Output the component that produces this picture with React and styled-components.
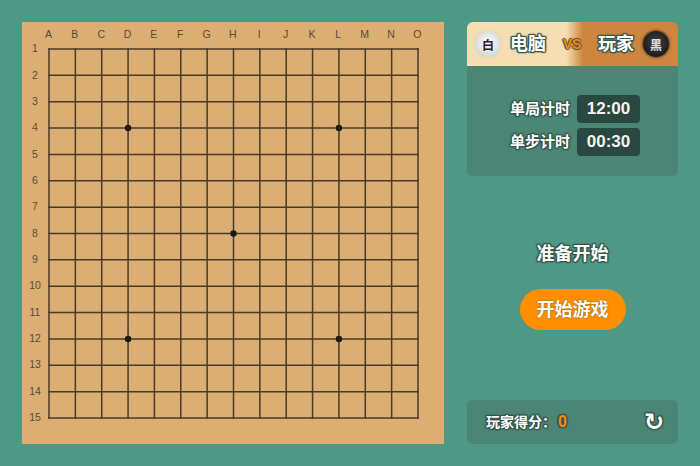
import React from "react"
import styled, { createGlobalStyle } from "styled-components"

const COLS = "ABCDEFGHIJKLMNO".split("")
const ROWS = Array.from({ length: 15 }, (_, i) => i + 1)
const STARS = [[3, 3], [11, 3], [7, 7], [3, 11], [11, 11]]
const STEP = 369 / 14

const outline = `
  text-shadow: 1px 0 1px #37574d, -1px 0 1px #37574d, 0 1px 1px #37574d, 0 -1px 1px #37574d,
    1px 1px 1px #37574d, -1px -1px 1px #37574d, 1px -1px 1px #37574d, -1px 1px 1px #37574d,
    0 0 2px #37574d;
`

const GlobalStyle = createGlobalStyle`
  html, body {
    margin: 0;
    padding: 0;
    background: #4f9886;
  }
  body {
    font-family: "Liberation Sans", "Noto Sans CJK SC", sans-serif;
  }
`

const Page = styled.div`
  width: 700px;
  height: 466px;
  box-sizing: border-box;
  padding: 22px;
  display: flex;
  justify-content: space-between;
  overflow: hidden;
`

const Board = styled.div`
  width: 422px;
  height: 422px;
  background: #dbaf73;
  box-sizing: border-box;
  display: grid;
  grid-template-columns: 26.5px 369px;
  grid-template-rows: 26.5px 369px;
`

const ColLabels = styled.div`
  grid-column: 2;
  display: flex;
  justify-content: space-between;
  margin: 0 -13.18px;
`

const ColLabel = styled.span`
  width: ${STEP}px;
  line-height: 25px;
  text-align: center;
  font-size: 10.5px;
  color: #5a4a33;
`

const RowLabels = styled.div`
  grid-row: 2;
  display: flex;
  flex-direction: column;
  justify-content: space-between;
  margin: -13.18px 0;
`

const RowLabel = styled.span`
  height: ${STEP}px;
  line-height: ${STEP}px;
  width: 26px;
  text-align: center;
  font-size: 10.5px;
  color: #5a4a33;
`

const Grid = styled.svg`
  display: block;
  overflow: visible;
`

const Side = styled.div`
  width: 211px;
  display: flex;
  flex-direction: column;
`

const TopCard = styled.div`
  height: 154px;
  background: #4b8675;
  border-radius: 6px;
  overflow: hidden;
`

const VsBar = styled.div`
  height: 44px;
  padding: 0 8px;
  display: flex;
  align-items: center;
  background: linear-gradient(90deg, #f5deb3 47%, #cd853f 55%);
`

const Stone = styled.div`
  width: 26px;
  height: 26px;
  border-radius: 50%;
  flex: none;
  display: flex;
  align-items: center;
  justify-content: center;
  font-size: 12px;
  font-weight: 700;
  background: ${p => (p.$black ? "radial-gradient(circle at 50% 45%, #444 0%, #1c1c1c 70%)" : "radial-gradient(circle at 50% 45%, #fff 0%, #d0d8d5 75%)")};
  box-shadow: 0 0 2px 1px ${p => (p.$black ? "#6b4a28" : "#e8d6b0")};
  color: ${p => (p.$black ? "#ddd" : "#222")};
`

const PlayerName = styled.span`
  font-size: 18px;
  line-height: 24px;
  font-weight: 700;
  color: #fff;
  margin: 0 9px;
  ${outline}
`

const Vs = styled.span`
  width: 20px;
  margin: 0 7px;
  font-size: 14px;
  font-weight: 700;
  text-align: center;
  color: #f28c0f;
  text-shadow: 1px 0 1px #5c4a2c, -1px 0 1px #5c4a2c, 0 1px 1px #5c4a2c, 0 -1px 1px #5c4a2c;
`

const Timers = styled.div`
  padding-top: 29px;
  display: flex;
  flex-direction: column;
  gap: 5px;
`

const TimerRow = styled.div`
  display: flex;
  align-items: center;
  justify-content: center;
  gap: 7px;
  padding-left: 5px;
`

const TimerLabel = styled.span`
  font-size: 15px;
  line-height: 20px;
  font-weight: 700;
  color: #fff;
  ${outline}
`

const TimerValue = styled.span`
  width: 63px;
  height: 28px;
  border-radius: 4px;
  background: #29483f;
  color: #f4f4f4;
  font-size: 17px;
  font-weight: 700;
  line-height: 28px;
  text-align: center;
`

const Middle = styled.div`
  flex: 1;
  display: flex;
  flex-direction: column;
  align-items: center;
`

const Status = styled.div`
  margin-top: 66px;
  font-size: 18px;
  line-height: 24px;
  font-weight: 700;
  color: #fff;
  ${outline}
`

const StartButton = styled.button`
  margin-top: 23px;
  width: 106px;
  height: 41px;
  padding: 0 0 3px;
  border: 0;
  border-radius: 21px;
  background: #ff8f00;
  color: #fff;
  font-family: inherit;
  font-size: 18px;
  font-weight: 700;
  text-shadow: 0 0 2px #7a5a20;
`

const ScoreBar = styled.div`
  height: 44px;
  background: #4b8675;
  border-radius: 6px;
  display: flex;
  align-items: center;
  justify-content: space-between;
  padding: 0 14px 0 19px;
`

const ScoreText = styled.div`
  padding-bottom: 3px;
`

const ScoreLabel = styled.span`
  font-size: 14px;
  font-weight: 700;
  color: #fff;
  ${outline}
`

const ScoreValue = styled.span`
  font-size: 16px;
  font-weight: 700;
  color: #f28c0f;
  margin-left: 2px;
  ${outline}
`

const Refresh = styled.span`
  font-family: "DejaVu Sans", sans-serif;
  font-size: 24px;
  font-weight: 700;
  line-height: 24px;
  color: #fff;
  ${outline}
`

const GoGrid = () => (
  <Grid width="369" height="369" viewBox="0 0 369 369">
    {ROWS.map((_, i) => (
      <g key={i} stroke="#4a3a24" strokeWidth="1.5">
        <line x1={-0.75} x2={369.75} y1={i * STEP} y2={i * STEP} />
        <line y1={-0.75} y2={369.75} x1={i * STEP} x2={i * STEP} />
      </g>
    ))}
    {STARS.map(([x, y]) => (
      <circle key={`${x}-${y}`} cx={x * STEP} cy={y * STEP} r="3.2" fill="#1d1a16" />
    ))}
  </Grid>
)

export default function App() {
  return (
    <Page>
      <GlobalStyle />
      <Board>
        <ColLabels>
          {COLS.map(c => (
            <ColLabel key={c}>{c}</ColLabel>
          ))}
        </ColLabels>
        <RowLabels>
          {ROWS.map(r => (
            <RowLabel key={r}>{r}</RowLabel>
          ))}
        </RowLabels>
        <GoGrid />
      </Board>
      <Side>
        <TopCard>
          <VsBar>
            <Stone>白</Stone>
            <PlayerName>电脑</PlayerName>
            <Vs>VS</Vs>
            <PlayerName>玩家</PlayerName>
            <Stone $black>黑</Stone>
          </VsBar>
          <Timers>
            <TimerRow>
              <TimerLabel>单局计时</TimerLabel>
              <TimerValue>12:00</TimerValue>
            </TimerRow>
            <TimerRow>
              <TimerLabel>单步计时</TimerLabel>
              <TimerValue>00:30</TimerValue>
            </TimerRow>
          </Timers>
        </TopCard>
        <Middle>
          <Status>准备开始</Status>
          <StartButton>开始游戏</StartButton>
        </Middle>
        <ScoreBar>
          <ScoreText>
            <ScoreLabel>玩家得分：</ScoreLabel>
            <ScoreValue>0</ScoreValue>
          </ScoreText>
          <Refresh>↻</Refresh>
        </ScoreBar>
      </Side>
    </Page>
  )
}
